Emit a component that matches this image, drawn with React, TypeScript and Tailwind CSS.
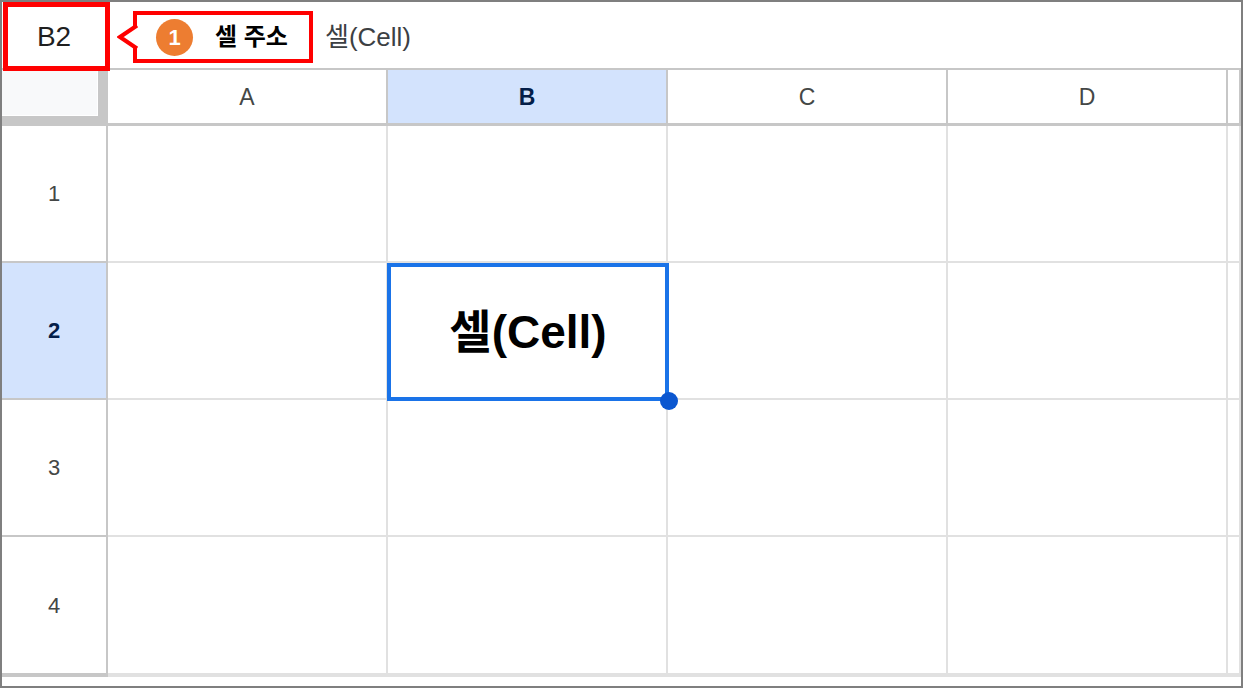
import React from "react"

const font = {
  fontFamily: '"Liberation Sans", Arial, "Noto Sans CJK KR", sans-serif'
}

const columns = ["A", "B", "C", "D", ""]
const rows = ["1", "2", "3", "4", ""]

const Callout: React.FC = () => (
  <div className="relative ml-[23px] mt-[9px] flex h-[52px] w-[180px] shrink-0 items-center self-start border-[4px] border-[#ff0000] bg-white pl-[19px]">
    <svg
      className="absolute left-[-20px] top-[7px]"
      width="24"
      height="30"
      viewBox="0 0 24 30"
    >
      <polygon points="3,15 19,5 24,5 24,25 19,25" fill="#ffffff" />
      <polyline
        points="20,3.5 3,15 20,26.5"
        fill="none"
        stroke="#ff0000"
        strokeWidth="4"
      />
    </svg>
    <div className="flex h-[37px] w-[37px] items-center justify-center rounded-full bg-[#ed7d31] text-[22px] font-bold text-white">
      1
    </div>
    <span className="ml-[22px] text-[24px] font-bold text-black">
      셀 주소
    </span>
  </div>
)

const App: React.FC = () => {
  return (
    <div
      className="h-[688px] w-[1243px] overflow-hidden border-2 border-[#7f7f7f] bg-white"
      style={font}
    >
      {/* formula bar */}
      <div className="relative z-10 flex h-[68px] items-start border-b-2 border-[#c7c7c7]">
        <div className="ml-[1px] flex h-[69px] w-[107px] shrink-0 items-center justify-center border-[5px] border-[#ff0000] bg-white pr-[5px] text-[28px] text-[#1f1f1f]">
          B2
        </div>
        <Callout />
        <span className="ml-[12px] mt-[16px] text-[26px] text-[#3c4043]">
          셀(Cell)
        </span>
      </div>

      {/* grid */}
      <div className="grid grid-cols-[106px_280px_280px_280px_280px_1fr] grid-rows-[56px_137px_137px_137px_138px_1fr]">
        <div className="h-[56px] bg-[#c7c7c7]">
          <div className="h-[46px] w-[96px] border-r border-b border-white bg-[#f8f9fa]" />
        </div>
        {columns.map((c, i) => (
          <div
            key={"h" + i}
            className={
              "flex items-center justify-center border-r-2 border-b-[3px] border-[#c7c7c7] pt-[2px] text-[23px] " +
              (c === "B"
                ? "bg-[#d3e3fd] font-bold text-[#041e49]"
                : "bg-white text-[#444746]")
            }
          >
            {c}
          </div>
        ))}
        {rows.map((r, ri) => (
          <React.Fragment key={"r" + ri}>
            <div
              className={
                "flex items-center justify-center border-r-2 border-b-2 border-[#c7c7c7] text-[22px] " +
                (r === "2"
                  ? "bg-[#d3e3fd] font-bold text-[#041e49]"
                  : "bg-white text-[#444746]")
              }
            >
              {r}
            </div>
            {columns.map((c, ci) => (
              <div
                key={c + ri + ci}
                className="relative border-r-2 border-b-2 border-[#e1e1e1] bg-white"
              >
                {c === "B" && r === "2" && (
                  <div className="absolute left-[-1px] top-[0px] right-[-3px] bottom-[-3px] z-10 flex items-center justify-center border-[4px] border-[#1a73e8]">
                    <span className="text-[46px] font-bold text-black">
                      셀(Cell)
                    </span>
                    <div className="absolute right-[-13px] bottom-[-13px] h-[18px] w-[18px] rounded-full bg-[#0b57d0]" />
                  </div>
                )}
              </div>
            ))}
          </React.Fragment>
        ))}
      </div>
    </div>
  )
}

export default App
